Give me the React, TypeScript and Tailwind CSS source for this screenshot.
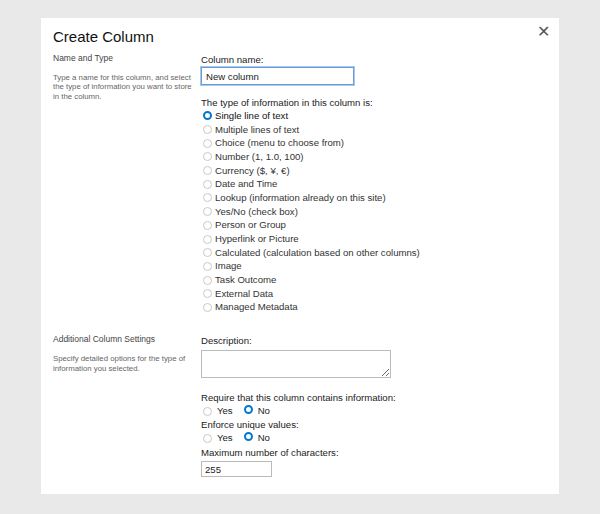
const TYPES = [
  'Single line of text',
  'Multiple lines of text',
  'Choice (menu to choose from)',
  'Number (1, 1.0, 100)',
  'Currency ($, ¥, €)',
  'Date and Time',
  'Lookup (information already on this site)',
  'Yes/No (check box)',
  'Person or Group',
  'Hyperlink or Picture',
  'Calculated (calculation based on other columns)',
  'Image',
  'Task Outcome',
  'External Data',
  'Managed Metadata',
];

function Radio({ on }: { on?: boolean }) {
  return on ? (
    <span className="inline-block w-[9px] h-[9px] rounded-full border-[2.5px] border-[#0078d4] bg-white shrink-0" />
  ) : (
    <span className="inline-block w-[9px] h-[9px] rounded-full border border-[#c8c8c8] bg-white shrink-0" />
  );
}

function YesNo() {
  return (
    <div className="flex items-center h-[14px] pl-[2px]">
      <Radio />
      <span className="ml-[5px]">Yes</span>
      <span className="ml-[11px]"><Radio on /></span>
      <span className="ml-[5px]">No</span>
    </div>
  );
}

export default function App() {
  return (
    <div className="w-[600px] h-[514px] bg-[#e9e9e9] pt-[18px] pl-[41px]" style={{ fontFamily: '"Liberation Sans", Arial, sans-serif' }}>
      <div className="relative w-[518px] h-[476px] bg-white pl-[12px] text-[#222]">
        <div className="text-[15px] pt-[8px] h-[32px] text-[#111]">Create Column</div>
        <button className="absolute right-[9px] top-[6px] text-[16px] text-[#555] leading-none">✕</button>

        <div className="flex mt-[2px]">
          <div className="w-[148px] text-[#444]">
            <div className="text-[8.5px]">Name and Type</div>
            <div className="w-[140px] text-[7.8px] text-[#666] mt-[8px] leading-[9.5px]">
              Type a name for this column, and select the type of information you want to store in the column.
            </div>
          </div>
          <div className="text-[9.6px] leading-[12px]">
            <div className="mt-[2px]">Column name:</div>
            <input
              defaultValue="New column"
              className="mt-[1px] w-[153px] h-[18px] border border-[#6b9bd6] outline outline-[1px] outline-[#a8c8ee] px-[4px] text-[9.6px]"
            />
            <div className="mt-[12px]">The type of information in this column is:</div>
            <div>
              {TYPES.map((t, i) => (
                <div key={t} className="flex items-center h-[13.7px] pl-[2px]">
                  <Radio on={i === 0} />
                  <span className={`ml-[3px] ${i === 0 ? 'text-[#111]' : 'text-[#333]'}`}>{t}</span>
                </div>
              ))}
            </div>
          </div>
        </div>

        <div className="flex mt-[19px]">
          <div className="w-[148px] text-[#444]">
            <div className="text-[8.5px]">Additional Column Settings</div>
            <div className="w-[140px] text-[7.8px] text-[#666] mt-[8px] leading-[9.5px]">
              Specify detailed options for the type of information you selected.
            </div>
          </div>
          <div className="text-[9.6px] leading-[12px]">
            <div className="mt-[2px]">Description:</div>
            <textarea className="mt-[3px] block w-[190px] h-[28px] border border-[#bbb] resize-y" />
            <div className="mt-[14px]">Require that this column contains information:</div>
            <YesNo />
            <div className="mt-[1px]">Enforce unique values:</div>
            <YesNo />
            <div className="mt-[2px]">Maximum number of characters:</div>
            <input
              defaultValue="255"
              className="mt-[2px] w-[71px] h-[16px] border border-[#bbb] px-[3px] text-[9.6px]"
            />
          </div>
        </div>
      </div>
    </div>
  );
}
